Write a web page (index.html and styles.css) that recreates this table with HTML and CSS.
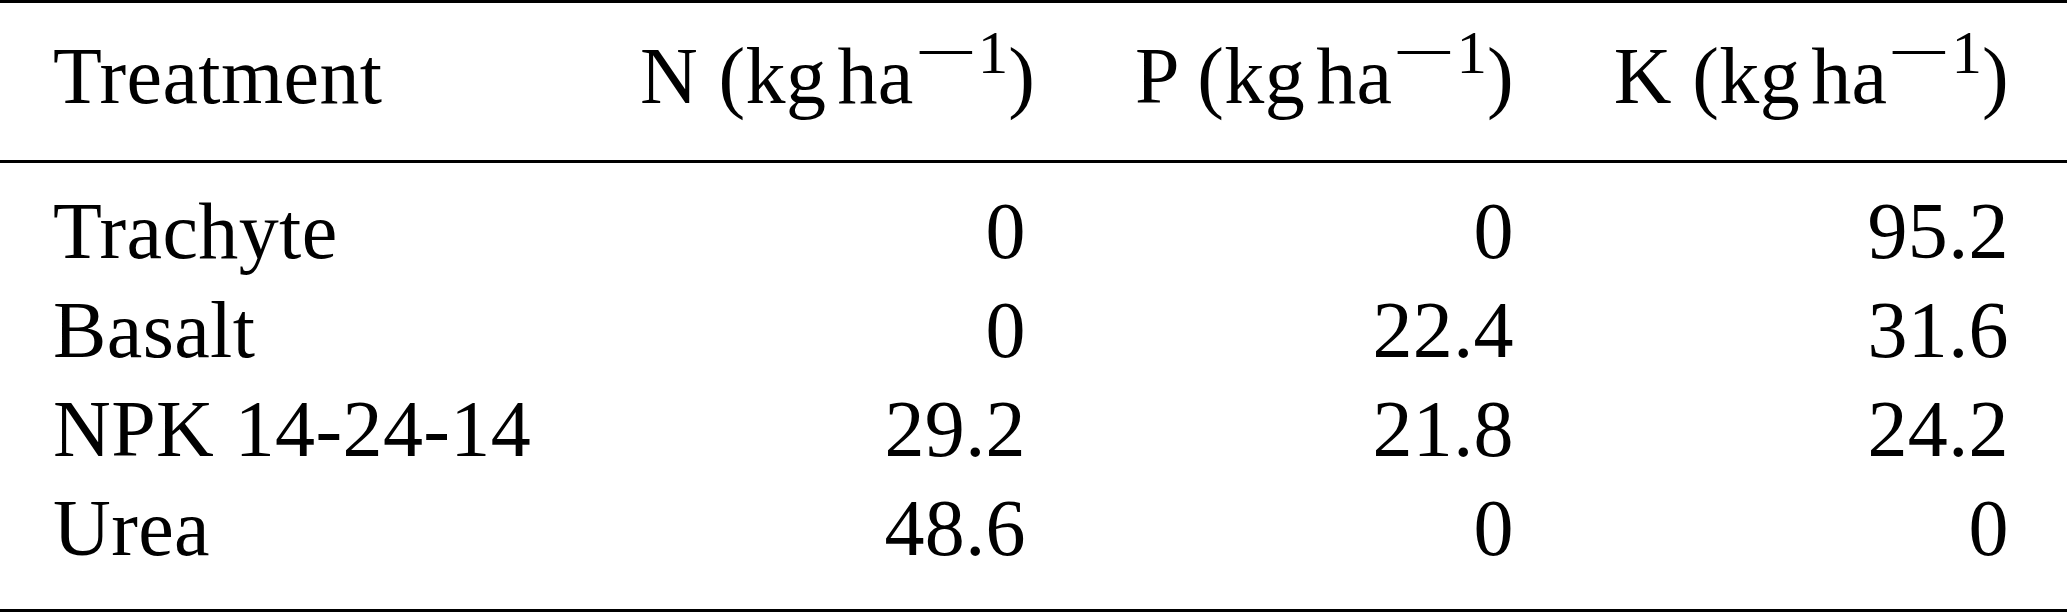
FILE: index.html
```
<!DOCTYPE html>
<html lang="en">
<head>
    <meta charset="UTF-8">
    <meta name="viewport" content="width=device-width, initial-scale=1.0">
    <title>Nutrient inputs by treatment</title>
    <link rel="stylesheet" href="styles.css">
</head>
<body>

<table class="nutrients">
    <colgroup>
        <col class="col-name">
        <col class="col-n">
        <col class="col-p">
        <col class="col-k">
    </colgroup>
    <thead>
        <tr>
            <th class="label">Treatment</th>
            <th class="num">N (kg<span class="gap"></span>ha<span class="exp"><span class="minus">−</span>1</span>)</th>
            <th class="num">P (kg<span class="gap"></span>ha<span class="exp"><span class="minus">−</span>1</span>)</th>
            <th class="num">K (kg<span class="gap"></span>ha<span class="exp"><span class="minus">−</span>1</span>)</th>
        </tr>
    </thead>
    <tbody>
        <tr>
            <td class="label">Trachyte</td>
            <td class="num">0</td>
            <td class="num">0</td>
            <td class="num">95.2</td>
        </tr>
        <tr>
            <td class="label">Basalt</td>
            <td class="num">0</td>
            <td class="num">22.4</td>
            <td class="num">31.6</td>
        </tr>
        <tr>
            <td class="label">NPK 14-24-14</td>
            <td class="num">29.2</td>
            <td class="num">21.8</td>
            <td class="num">24.2</td>
        </tr>
        <tr>
            <td class="label">Urea</td>
            <td class="num">48.6</td>
            <td class="num">0</td>
            <td class="num">0</td>
        </tr>
    </tbody>
</table>

</body>
</html>
```

FILE: styles.css
```
/* Tabela no estilo booktabs */
* {
    margin: 0;
    padding: 0;
    box-sizing: border-box;
}

body {
    margin: 0;
    background-color: #fff;
    color: #000;
    font-family: "Liberation Serif", "Times New Roman", serif;
}

.nutrients {
    width: 2067px;
    table-layout: fixed;
    border-collapse: collapse;
    border-top: 3px solid #000;
    border-bottom: 3px solid #000;
    font-size: 80px;
    line-height: 99px;
    letter-spacing: 0.4px;
}

.col-name { width: 611px; }
.col-n { width: 444px; }
.col-p { width: 488px; }
.col-k { width: 524px; }

.nutrients th,
.nutrients td {
    padding: 0 29px;
    font-weight: normal;
    white-space: nowrap;
}

.nutrients .label {
    text-align: left;
    padding-left: 53px;
}

.nutrients .num {
    text-align: right;
}

.nutrients th:last-child,
.nutrients td:last-child {
    padding-right: 58px;
}

/* cabeçalho */
.nutrients thead tr {
    border-bottom: 3px solid #000;
}

.nutrients thead th {
    padding-top: 24px;
    padding-bottom: 34px;
}

.nutrients tbody tr:first-child td {
    padding-top: 19px;
}

.nutrients tbody tr:last-child td {
    padding-bottom: 31px;
}

.gap {
    display: inline-block;
    width: 11px;
}

.exp {
    font-size: 61px;
    line-height: 0;
    letter-spacing: 0;
    vertical-align: 30px;
}

.minus {
    display: inline-block;
    width: 64px;
    text-align: left;
    transform: scaleX(1.85);
    transform-origin: left center;
}
```
